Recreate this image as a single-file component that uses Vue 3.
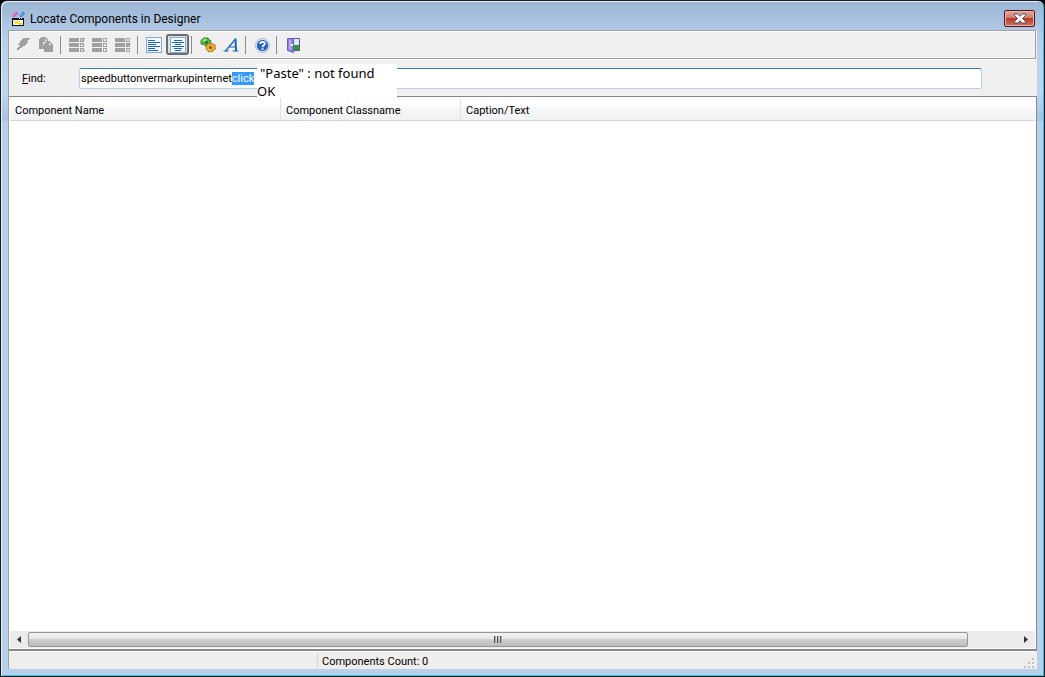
<script setup>
import { onMounted, ref } from 'vue'

const query = ref('speedbuttonvermarkupinternetclick')
const box = ref(null)
const columns = ['Component Name', 'Component Classname', 'Caption/Text']

onMounted(() => {
  box.value.focus()
  box.value.setSelectionRange(28, 33)
})
</script>

<template>
  <div class="window">
    <header class="titlebar">
      <svg class="appicon" width="16" height="16" viewBox="0 0 16 16" shape-rendering="crispEdges">
        <path d="M1 4h1V3h1V2h1V1h2v1h1v1H6v1H5v1H4v1H2V5H1z" fill="#d84fc0" />
        <path d="M2 4h1V3h1V2h1v1H4v1H3v1H2z" fill="#ffb0ee" />
        <path d="M8 4h1V3h1V2h1V1h2v1h1v1h-1v1h-1v1h-1v1H9V5H8z" fill="#3b7fe0" />
        <path d="M9 4h1V3h1V2h1v1h-1v1h-1v1H9z" fill="#a9d4ff" />
        <path d="M1 7h12v8H1z" fill="#111" />
        <path d="M2 9h10v5H2z" fill="#fff" />
        <path d="M3 10h6v1h1v1h1v2H8v-1H4v-1H3z" fill="#f3e33c" />
        <path d="M8 7h1v1H8zM10 7h1v1h-1z" fill="#ddd" />
      </svg>
      <h1>Locate Components in Designer</h1>
      <button class="close" type="button" aria-label="Close">
        <svg width="14" height="11" viewBox="0 0 14 11">
          <path d="M1.500 1h3.200L7 3.200 9.300 1h3.200v1.500L9.500 5.500l3 3V10H9.300L7 7.800 4.700 10H1.500V8.500l3-3-3-3z" fill="#fff" stroke="#55505c" />
        </svg>
      </button>
    </header>

    <main class="client">
      <div class="toolbar" role="toolbar">
        <button type="button" aria-label="Go to component" disabled>
          <svg width="16" height="16" viewBox="0 0 16 16" shape-rendering="crispEdges"><path d="M8 1h7v1h-1v1h-1v1h-1v1h1v1h-1v1h-1v1h-1v1H8v1H7v1H5v1H4v1H2v-2h1v-1h1v-1h1v-1H3V7h1V6h1V4h1V3h1V2h1z" fill="#a0a0a0" /></svg>
        </button>
        <button type="button" aria-label="Copy" disabled>
          <svg width="16" height="16" viewBox="0 0 16 16" shape-rendering="crispEdges"><path d="M3 0h5v1h1v1h1v2h2v1h1v1h1v1h1v8H6v-3H1V2h1V1h1z" fill="#a0a0a0" /><path d="M7 2h1v1h1v1H7zM11 6h1v1h1v1h-2zM5 5h1v3H5zM6 5h2v1H6z" fill="#f0f0f0" /></svg>
        </button>
        <span class="sep"></span>
        <button v-for="n in 3" :key="n" type="button" :aria-label="'Selection ' + n" disabled>
          <svg width="16" height="16" viewBox="0 0 16 16" shape-rendering="crispEdges">
            <path d="M0 1h10v4H0zM0 6h10v4H0zM0 11h10v4H0z" fill="#a0a0a0" />
            <path d="M11 1h4v4h-4zM11 6h4v4h-4zM11 11h4v4h-4z" fill="#a0a0a0" />
            <path d="M12 2h2v2h-2zM12 7h2v2h-2zM12 12h2v2h-2z" fill="#f0f0f0" />
            <path v-if="n === 1" d="M13 2h1V1h2v1h-1v1h-1v1h-1zM13 7h2v1h-2zM12 12h1v1h-1zM14 13h2v1h-2z" fill="#a0a0a0" />
            <path v-if="n === 3" d="M12 7h3v2h-3zM15 6h1v1h-1z" fill="#a0a0a0" />
          </svg>
        </button>
        <span class="sep"></span>
        <button type="button" aria-label="Align left">
          <svg width="16" height="16" viewBox="0 0 16 16" shape-rendering="crispEdges"><path d="M0 0h16v16H0z" fill="#80aada" /><path d="M1 1h14v14H1z" fill="#f5faff" /><path d="M2 3h7v1H2zM2 5h12v1H2zM2 7h8v1H2zM2 9h12v1H2zM2 11h7v1H2zM2 13h10v1H2z" fill="#1767c2" /></svg>
        </button>
        <button class="pressed" type="button" aria-label="Align centre" aria-pressed="true">
          <svg width="16" height="16" viewBox="0 0 16 16" shape-rendering="crispEdges"><path d="M0 0h16v16H0z" fill="#80aada" /><path d="M1 1h14v14H1z" fill="#f5faff" /><path d="M4 3h8v1H4zM2 5h12v1H2zM5 7h6v1H5zM2 9h12v1H2zM4 11h8v1H4zM5 13h6v1H5z" fill="#1767c2" /></svg>
        </button>
        <span class="sep"></span>
        <button type="button" aria-label="Options">
          <svg width="16" height="16" viewBox="0 0 16 16">
            <path d="M1 3l2-.5L4 .5l2 .8L8 .8l1 2 2 1-.6 2L10 8 7.500 8 5.500 9 4 7.500 1 7 1.200 5z" fill="#4fb53c" stroke="#37903a" />
            <path d="M2 4l3-2.500L7 3 4.500 4.500z" fill="#a9e68c" />
            <path d="M6 9l1.500-1L8 6.500l2 .5 2-1 1.300 1.500 2 .5-.3 2 .5 2-2 .8-1 2-2-.5-2 .7-1-2L6 12z" fill="#efae35" stroke="#bb7a1c" />
            <circle cx="10.500" cy="10.500" r="1.600" fill="#8d5a13" /><circle cx="6.500" cy="5.500" r="1.400" fill="#2a6d28" />
          </svg>
        </button>
        <button type="button" aria-label="Font">
          <svg width="17" height="16" viewBox="0 0 17 16"><path d="M.5 14h5M9.500 14h6M2.500 14L12.500 2M5.500 10H13" fill="none" stroke="#1667bd" stroke-width="1.200" /><path d="M12.500 1.500l.5 12.500" stroke="#1667bd" stroke-width="2" /></svg>
        </button>
        <span class="sep"></span>
        <button type="button" aria-label="Help">
          <svg width="16" height="16" viewBox="0 0 16 16"><circle cx="8.500" cy="8.500" r="7" fill="#f4f8fe" stroke="#a3b3cc" /><circle cx="8.500" cy="8.500" r="5.700" fill="#2763c4" /><path d="M6.200 7.100c0-3 4.600-3 4.600-.4C10.800 8.500 8.500 8.200 8.500 10.200" fill="none" stroke="#fff" stroke-width="1.800" /><path d="M7.600 11.200h1.800v1.700H7.600z" fill="#fff" /></svg>
        </button>
        <span class="sep"></span>
        <button type="button" aria-label="Exit">
          <svg width="16" height="16" viewBox="0 0 16 16"><path d="M7.500 1.500h7v12h-7z" fill="#f4f4ff" stroke="#5a4fae" /><path d="M9 8h5v5H9z" fill="#2f9a35" /><path d="M9 2h5v6H9z" fill="#d9efff" /><path d="M2.500 1.500h6v14l-6-2z" fill="#8d83dc" stroke="#6a5fc0" /><path d="M4 3h2v10l-2-.7z" fill="#b4adf0" /><path d="M6 7h2v2H6z" fill="#fff" /></svg>
        </button>
      </div>

      <div class="findbar">
        <label for="find"><u>F</u>ind:</label>
        <input id="find" ref="box" v-model="query" type="text" spellcheck="false" autocomplete="off" />
        <div class="note" role="status">
          <p class="message">"Paste" : not found</p>
          <p>OK</p>
        </div>
      </div>

      <section class="list">
        <table>
          <colgroup><col class="name" /><col class="class" /><col /></colgroup>
          <thead>
            <tr><th v-for="c in columns" :key="c" scope="col">{{ c }}</th></tr>
          </thead>
        </table>
        <div class="scroll">
          <button type="button" aria-label="Scroll left"><svg width="4" height="7" viewBox="0 0 4 7"><path d="M4 0v7L0 3.500z" fill="#333" /></svg></button>
          <div class="track"><div class="thumb"><i></i><i></i><i></i></div></div>
          <button type="button" aria-label="Scroll right"><svg width="4" height="7" viewBox="0 0 4 7"><path d="M0 0v7l4-3.500z" fill="#333" /></svg></button>
        </div>
      </section>

      <footer class="status">
        <span class="pane"></span>
        <span class="count">Components Count: 0</span>
        <svg class="grip" width="12" height="12" viewBox="0 0 12 12" shape-rendering="crispEdges"><path d="M8 1h2v2H8zM4 5h2v2H4zM8 5h2v2H8zM0 9h2v2H0zM4 9h2v2H4zM8 9h2v2H8z" fill="#c2bfbd" /></svg>
      </footer>
    </main>
  </div>
</template>

<style>
body {
  margin: 0;
  background: #000;
}
</style>

<style scoped>
* {
  box-sizing: border-box;
}

.window {
  display: flex;
  flex-direction: column;
  min-height: 100vh;
  padding: 0 7px 7px 7px;
  border: 1px solid #1b1b20;
  border-radius: 7px 7px 0 0;
  background: linear-gradient(#9ab4d3 0, #b9d0ea 38px, #bfd6ef 90px, #a8c4e2 119px, #b9d0ea 121px);
  box-shadow: inset 1px 1px 0 #e4eefa, inset -1px -1px 0 #34c4df;
  font-family: Roboto, "Liberation Sans", sans-serif;
  font-size: 11px;
  color: #000;
}

.titlebar {
  display: flex;
  align-items: center;
  height: 29px;
  padding: 6px 2px 0 3px;
}

h1 {
  flex: 1;
  margin: 0 0 0 3px;
  font-size: 12px;
  font-weight: 400;
  line-height: 16px;
}

button {
  margin: 0;
  padding: 0;
  border: 0;
  background: none;
  font: inherit;
}

.close {
  display: flex;
  align-items: center;
  justify-content: center;
  width: 31px;
  height: 17px;
  border: 1px solid #4f1622;
  border-radius: 2px;
  background: linear-gradient(#e3a399, #d17c70 50%, #b83b26 50%, #cd7360);
  box-shadow: inset 0 0 0 1px #eab3aa;
}

.client {
  display: flex;
  flex: 1;
  flex-direction: column;
  border-left: 1px solid #a0a0a0;
  background: #f0f0f0;
}

.toolbar {
  display: flex;
  align-items: center;
  height: 29px;
  margin-right: 1px;
  padding-left: 3px;
  border: solid #a0a0a0;
  border-width: 1px 1px 1px 0;
  box-shadow: inset 0 1px 0 #fff, 0 1px 0 #fff;
}

.toolbar button {
  display: flex;
  align-items: center;
  width: 23px;
  height: 21px;
  padding-left: 3px;
}

.toolbar .pressed {
  border: 2px solid #6c6c70;
  border-radius: 3px;
  padding-left: 2px;
  background: #dfe1e5;
}

.sep {
  width: 8px;
  height: 18px;
  margin: 0 -2px 0 2px;
  border-left: 1px solid #8c8c8c;
}

.findbar {
  position: relative;
  display: flex;
  align-items: center;
  height: 37px;
  padding: 1px 55px 0 13px;
}

label {
  width: 57px;
  padding-top: 2px;
  line-height: 16px;
}

input {
  flex: 1;
  min-width: 0;
  height: 21px;
  padding: 0 1px;
  border: 1px solid #b5cfe7;
  border-top-color: #3d7bad;
  border-radius: 2px;
  outline: 0;
  background: #fff;
  color: #000;
  font: inherit;
}

input::selection {
  background: #3399ff;
  color: #fff;
}

.note {
  position: absolute;
  top: 5px;
  left: 248px;
  width: 140px;
  height: 33px;
  background: #fff;
  font-family: "Noto Sans", "Open Sans", sans-serif;
  font-size: 13px;
  line-height: 18px;
}

.note p {
  margin: 0;
}

.note .message {
  padding-left: 3px;
}

.list {
  display: flex;
  flex: 1;
  flex-direction: column;
  padding: 1px;
  border: solid #828790;
  border-width: 1px 1px 2px 0;
  background: #fff;
}

table {
  width: 100%;
  table-layout: fixed;
  border-collapse: separate;
  border-spacing: 0;
}

.name {
  width: 271px;
}

.class {
  width: 180px;
}

th {
  height: 23px;
  padding: 4px 5px 0;
  border-right: 1px solid #e0e1e3;
  border-bottom: 1px solid #d5d5d5;
  background: linear-gradient(#fff 40%, #f7f8fa 42%, #f1f2f4);
  font-weight: 400;
  text-align: left;
  line-height: 16px;
}

th:last-child {
  border-right: 0;
}

.scroll {
  display: flex;
  height: 17px;
  margin-top: auto;
  background: #ececec;
}

.scroll button {
  display: flex;
  align-items: center;
  justify-content: center;
  width: 18px;
}

.track {
  flex: 1;
  padding: 1px 0;
}

.thumb {
  display: flex;
  align-items: center;
  justify-content: center;
  gap: 1px;
  width: 95%;
  height: 15px;
  border: 1px solid #979797;
  border-radius: 2px;
  background: linear-gradient(#f3f3f3, #e6e6e6 48%, #cfcfcf 50%, #bdbdbd);
}

.thumb i {
  width: 2px;
  height: 7px;
  background: linear-gradient(90deg, #555 50%, #aaa 50%);
}

.status {
  display: flex;
  align-items: center;
  height: 18px;
  border-top: 1px solid #fff;
  background: #f0eeec;
  line-height: 16px;
}

.pane {
  width: 309px;
  height: 16px;
  border-right: 1px solid #d5d5d5;
}

.count {
  flex: 1;
  padding: 2px 0 0 4px;
}

.grip {
  margin: 4px 1px 0 0;
}
</style>
